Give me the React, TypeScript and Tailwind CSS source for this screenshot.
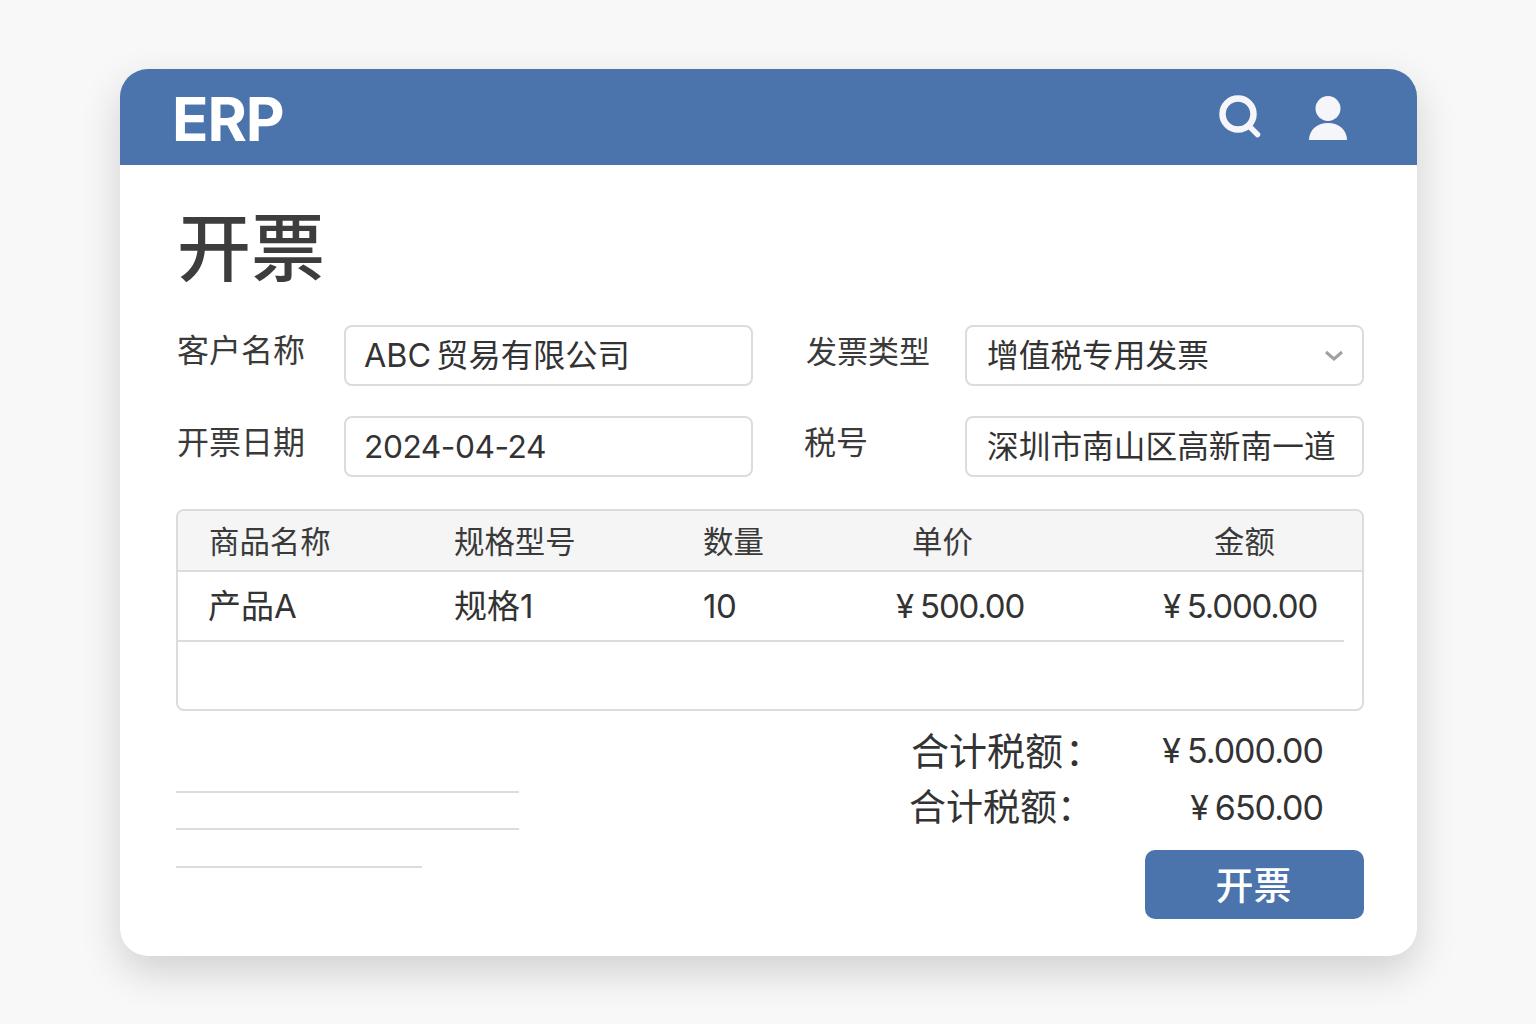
const cjk = "font-['Inter','Noto_Sans_CJK_SC',sans-serif]";

const fieldBox =
  "flex h-[61px] items-center rounded-[8px] border-2 border-[#dcdcdc] bg-white text-[31.7px] leading-none text-[#333333]";

const Field = ({ text, className = "" }: { text: string; className?: string }) => (
  <div className={`${fieldBox} ${className}`}>
    <span className="whitespace-nowrap">{text}</span>
  </div>
);

const Label = ({ text, className = "" }: { text: string; className?: string }) => (
  <div className={`self-center whitespace-nowrap leading-none text-[#3a3a3a] ${className}`}>{text}</div>
);

const Yen = ({ value, className = "" }: { value: string; className?: string }) => (
  <span className={`flex items-center whitespace-nowrap ${className}`}>
    <span className="mr-[7px]">¥</span>
    {value}
  </span>
);

const App = () => {
  return (
    <div className={`min-h-[1024px] bg-[#f8f8f9] pt-[69px] pl-[120px] ${cjk}`}>
      <div className="h-[887px] w-[1297px] overflow-hidden rounded-[28px] bg-white shadow-[0_16px_40px_rgba(0,0,0,0.16)]">
        <header className="flex h-[96px] items-center justify-between bg-[#4a74ab] pr-[69px] pl-[52px]">
          <span className="mt-[3px] text-[60px] leading-none font-bold tracking-[-1px] text-white">ERP</span>
          <div className="flex items-center gap-[46px]">
            <svg width="44" height="44" viewBox="0 0 44 44" fill="none" className="text-[#f6f6fa]">
              <circle cx="20" cy="19" r="15.5" stroke="currentColor" strokeWidth="6.5" />
              <path d="M31 31l8.5 8.5" stroke="currentColor" strokeWidth="5.5" strokeLinecap="round" />
            </svg>
            <svg width="40" height="44" viewBox="0 0 40 44" fill="currentColor" className="mt-[1px] text-[#f6f6fa]">
              <circle cx="20" cy="12.5" r="12.5" />
              <path d="M1 44c0-10 8-17 19-17s19 7 19 17z" />
            </svg>
          </div>
        </header>

        <main className="pt-[45px] pr-[53px] pl-[57px]">
          <h1 className="text-[74px] leading-[76px] font-medium text-[#3d3d3d]">开票</h1>

          <div className="mt-[39px] grid grid-cols-[167px_409px_53px_159px_399px] gap-y-[30px]">
            <Label text="客户名称" className="-mt-[9px] text-[32px]" />
            <Field text="ABC 贸易有限公司" className="pt-[2px] pl-[18px] text-[32.3px] [word-spacing:-4px]" />
            <div />
            <Label text="发票类型" className="-mt-[9px] text-[31px]" />
            <div className={`${fieldBox} justify-between px-[20px]`}>
              <span className="whitespace-nowrap">增值税专用发票</span>
              <svg width="20" height="12" viewBox="0 0 20 12" fill="none" className="mr-[-2px]">
                <path d="M2 2l8 7 8-7" stroke="#a0a0a0" strokeWidth="3" />
              </svg>
            </div>
            <Label text="开票日期" className="-mt-[7px] text-[32px]" />
            <Field text="2024-04-24" className="pl-[18px] tracking-[-0.45px]" />
            <div />
            <Label text="税号" className="-mt-[7px] -ml-[2px] text-[32px]" />
            <Field text="深圳市南山区高新南一道" className="pl-[20px]" />
          </div>

          <div className="mt-[32px] -ml-[1px] h-[202px] w-[1188px] overflow-hidden rounded-[8px] border-2 border-[#dcdcdc] pr-[18px]">
            <div className="-mr-[18px] grid h-[61px] grid-cols-[245px_249px_209px_302px_1fr] items-center border-b-2 border-[#dcdcdc] bg-[#f5f5f5] pt-[3px] pl-[31px] text-[30.4px] leading-none text-[#3a3a3a]">
              <span>商品名称</span>
              <span>规格型号</span>
              <span>数量</span>
              <span>单价</span>
              <span>金额</span>
            </div>
            <div className="grid h-[70px] grid-cols-[246px_248px_160px_1fr_1fr] items-center border-b-2 border-[#dcdcdc] pl-[30px] text-[33px] leading-none text-[#333333]">
              <span>产品A</span>
              <span>规格1</span>
              <span className="ml-[1px] tracking-[-0.5px]">10</span>
              <Yen value="500.00" className="justify-end pr-[79px] tracking-[-1.2px]" />
              <Yen value="5.000.00" className="justify-end pr-[27px] tracking-[-1.2px]" />
            </div>
          </div>

          <div className="mt-[18px] flex justify-between">
            <div className="-ml-[1px] flex w-[343px] flex-col gap-[35px] pt-[62px]">
              <div className="h-[2px] w-full bg-[#dcdcdc]" />
              <div className="h-[2px] w-full bg-[#dcdcdc]" />
              <div className="mt-[1px] h-[2px] w-[246px] bg-[#dcdcdc]" />
            </div>
            <div className="flex flex-col items-end">
              <div className="mr-[41px] flex w-[412px] items-center justify-between text-[34px] leading-[44px] tracking-[-1px] text-[#333333]">
                <span className="text-[38px] tracking-normal whitespace-nowrap">
                  合计税额<span className="ml-[2px]">：</span>
                </span>
                <Yen value="5.000.00" />
              </div>
              <div className="mt-[13px] mr-[41px] flex w-[414px] items-center justify-between text-[34px] leading-[44px] tracking-[-1px] text-[#333333]">
                <span className="text-[37px] tracking-normal whitespace-nowrap">合计税额：</span>
                <Yen value="650.00" />
              </div>
              <button className="mt-[20px] flex h-[69px] w-[219px] items-center justify-center rounded-[10px] bg-[#4a74ab] pr-[2px] text-[38px] leading-none font-medium text-white">
                开票
              </button>
            </div>
          </div>
        </main>
      </div>
    </div>
  );
};

export default App;
